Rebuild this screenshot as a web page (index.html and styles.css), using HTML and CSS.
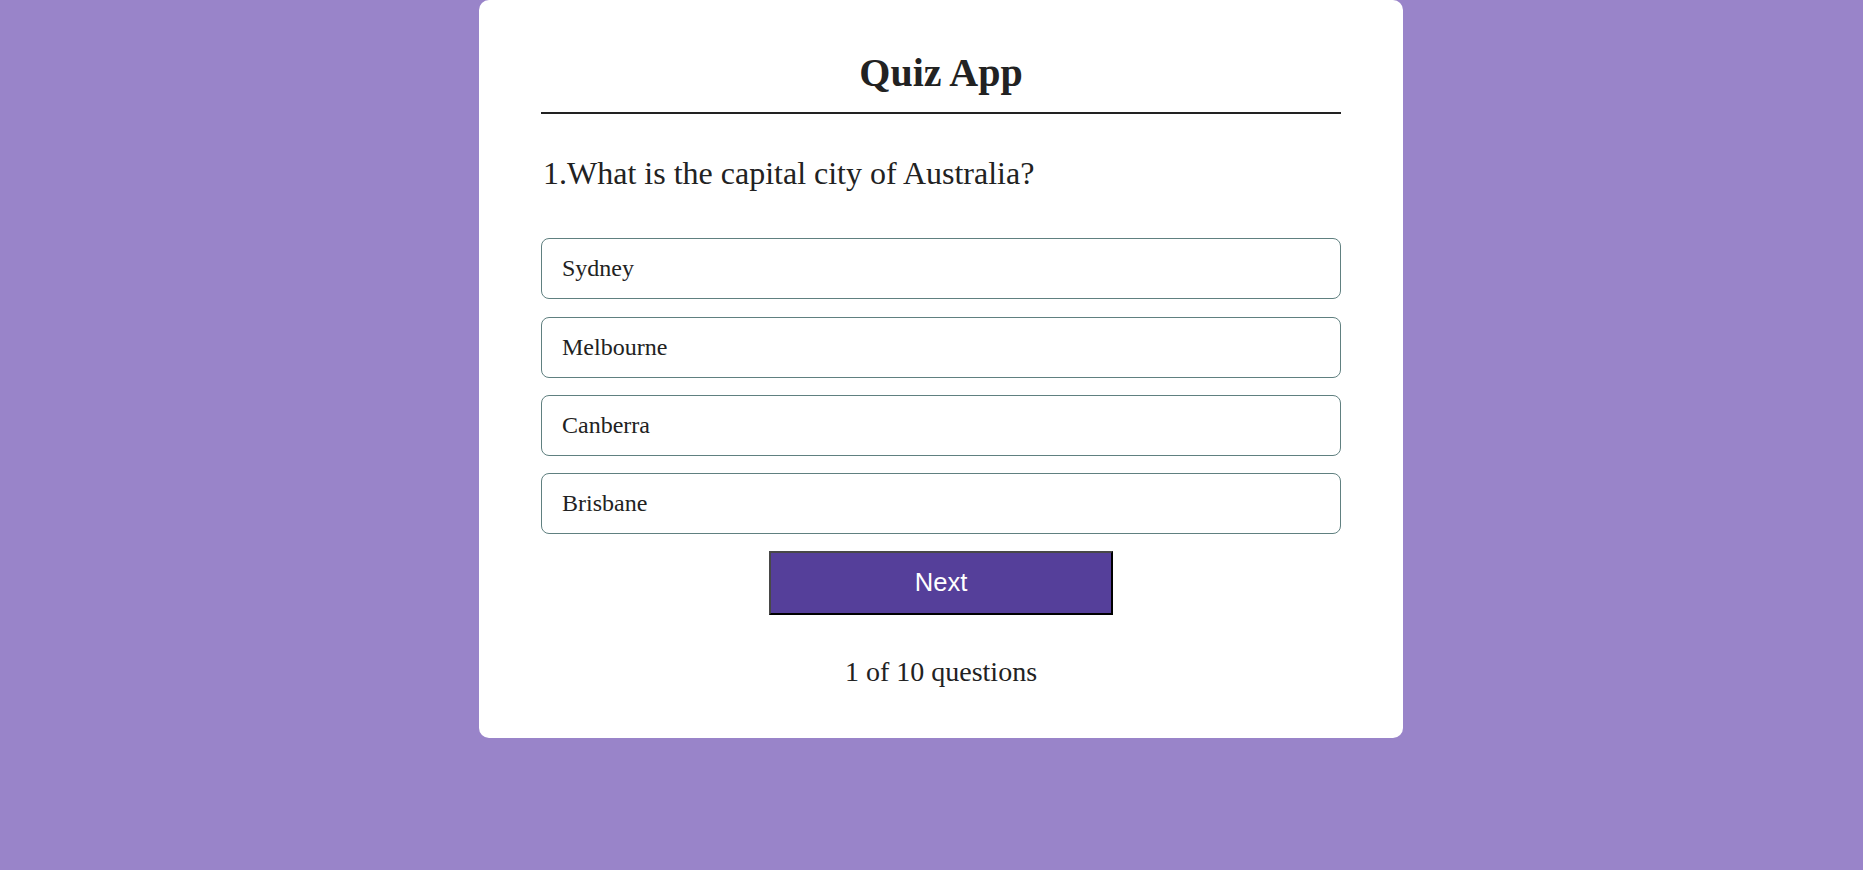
FILE: index.html
```html
<!DOCTYPE html>
<html lang="en">
<head>
<meta charset="utf-8">
<title>Quiz App</title>
<link rel="stylesheet" href="styles.css">
</head>
<body>
<main class="page">
  <div class="card">
    <h1 class="title">Quiz App</h1>
    <div class="quiz">
      <h2 class="question">1.What is the capital city of Australia?</h2>
      <div class="answers">
        <button class="answer">Sydney</button>
        <button class="answer">Melbourne</button>
        <button class="answer">Canberra</button>
        <button class="answer">Brisbane</button>
      </div>
      <button class="next">Next</button>
      <p class="progress">1 of 10 questions</p>
    </div>
  </div>
</main>
</body>
</html>
```

FILE: styles.css
```css
* {
  box-sizing: border-box;
}

html, body {
  margin: 0;
  padding: 0;
}

body {
  background: #9984c9;
  font-family: "Liberation Serif", "Times New Roman", serif;
  color: #222;
  min-height: 870px;
}

.page {
  display: flex;
  justify-content: center;
  padding-left: 19px;
}

.card {
  width: 924px;
  background: #fff;
  border-radius: 10px;
  padding: 49px 62px 50.3px;
}

.title {
  margin: 0;
  padding-bottom: 16px;
  border-bottom: 2px solid #222;
  font-family: "Liberation Serif", "Times New Roman", serif;
  font-weight: 700;
  font-size: 40px;
  line-height: normal;
  text-align: center;
  color: #222;
}

.quiz {
  display: flex;
  flex-direction: column;
  align-items: center;
}

.question {
  align-self: stretch;
  margin: 41px 0 0;
  padding-left: 2px;
  font-family: "Liberation Serif", "Times New Roman", serif;
  font-weight: 400;
  font-size: 32px;
  line-height: normal;
  color: #222;
}

.answers {
  align-self: stretch;
  margin-top: 46.3px;
  display: flex;
  flex-direction: column;
  gap: 17.33px;
}

.answer {
  display: flex;
  align-items: center;
  width: 100%;
  height: 61px;
  padding: 0 20px;
  background: #fff;
  border: 1px solid #608080;
  border-radius: 8px;
  font-family: "Liberation Serif", "Times New Roman", serif;
  font-size: 24px;
  line-height: normal;
  color: #222;
  text-align: left;
  cursor: pointer;
}

.next {
  margin-top: 16.7px;
  width: 344px;
  height: 64px;
  background: #553f9a;
  border-style: solid;
  border-width: 2px;
  border-color: #484848 #000 #000 #484848;
  font-family: "Liberation Sans", Arial, sans-serif;
  font-size: 25.6px;
  line-height: normal;
  color: #fff;
  cursor: pointer;
  padding: 0;
}

.progress {
  margin: 40.7px 0 0;
  font-size: 28px;
  line-height: normal;
  color: #222;
  text-align: center;
}
```
